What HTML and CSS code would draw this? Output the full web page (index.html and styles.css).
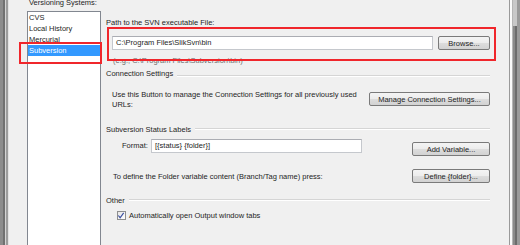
FILE: index.html
```html
<!DOCTYPE html>
<html lang="en">
<head>
    <meta charset="UTF-8">
    <title>Versioning Systems - Subversion</title>
    <link rel="stylesheet" href="styles.css">
</head>
<body>

<div class="window">
    <!-- left window frame -->
    <div class="edge-left"></div>

    <!-- list of versioning systems -->
    <div class="sidebar">
        <div class="sidebar-label">Versioning Systems:</div>
        <ul class="vcs-list">
            <li>CVS</li>
            <li>Local History</li>
            <li>Mercurial</li>
            <li class="selected">Subversion<span class="mark mark-item"></span></li>
        </ul>
    </div>

    <!-- subversion options -->
    <div class="options">
        <div class="mark mark-path"></div>

        <div class="text-row path-label">Path to the SVN executable File:</div>
        <div class="path-row">
            <div class="field path-field">C:\Program Files\SlikSvn\bin</div>
            <button class="btn browse-btn">Browse...</button>
        </div>
        <div class="text-row hint">(e.g., C:\Program Files\Subversion\bin)</div>

        <div class="group-title conn-title">Connection Settings</div>
        <div class="conn-row">
            <div class="conn-text">Use this Button to manage the Connection Settings for all previously used<br>URLs:</div>
            <button class="btn manage-btn">Manage Connection Settings...</button>
        </div>

        <div class="group-title status-title">Subversion Status Labels</div>
        <div class="format-row">
            <span class="format-label">Format:</span>
            <div class="field format-field">[{status} {folder}]</div>
            <button class="btn side-btn add-btn">Add Variable...</button>
        </div>
        <div class="define-row">
            <span>To define the Folder variable content (Branch/Tag name) press:</span>
            <button class="btn side-btn">Define {folder}...</button>
        </div>

        <div class="group-title other-title">Other</div>
        <label class="check-row">
            <span class="checkbox">
                <svg width="9" height="9" viewBox="0 0 9 9"><path d="M1.5 4.5 L3.5 7 L7.5 1.5" fill="none" stroke="#3a4fa0" stroke-width="1.3"/></svg>
            </span>
            Automatically open Output window tabs
        </label>
    </div>

    <!-- right window frame / scrollbar -->
    <div class="edge-right"><div class="thumb"></div></div>
</div>

</body>
</html>
```

FILE: styles.css
```css
/* page */
body {
    margin: 0;
    width: 520px;
    height: 245px;
    overflow: hidden;
    background-color: #f0f0f0;
    font-family: "Liberation Sans", Arial, sans-serif;
    font-size: 7.5px;
    color: #1e1e1e;
}

.window {
    display: flex;
    height: 245px;
}

/* frame on the left */
.edge-left {
    width: 9px;
    flex-shrink: 0;
    background: linear-gradient(to right, #8c8c8c 0 3px, #707070 3px 5px, #d4d4d4 5px 6px, #9c9c9c 6px 8px, #e2e2e2 8px 9px);
}

/* list column */
.sidebar {
    width: 92px;
    flex-shrink: 0;
    padding-left: 18px;
    box-sizing: border-box;
    display: flex;
    flex-direction: column;
}

.sidebar-label {
    margin-top: -2px;
    padding-left: 2px;
    height: 13px;
    line-height: 10px;
    white-space: nowrap;
}

.vcs-list {
    list-style: none;
    margin: 0;
    padding: 0;
    flex: 1;
    background: #fff;
    border: 1px solid #828790;
    border-bottom: none;
}

.vcs-list li {
    position: relative;
    height: 11px;
    line-height: 11px;
    padding-left: 1px;
}

.vcs-list li.selected {
    background: #3399ff;
    color: #fff;
}

/* red annotation boxes */
.mark {
    position: absolute;
    border: 2px solid #f0262b;
    box-sizing: border-box;
}

.mark-item {
    left: -9px;
    top: -3px;
    width: 83px;
    height: 22px;
}

.options {
    position: relative;
    flex: 1;
    min-width: 0;
    padding: 0 19px 0 5px;
}

.mark-path {
    left: 6px;
    top: 27px;
    width: 389px;
    height: 34px;
}

.text-row {
    height: 10px;
    line-height: 10px;
}

.path-label {
    margin-top: 18px;
}

/* text fields */
.field {
    box-sizing: border-box;
    height: 14px;
    line-height: 12px;
    padding-left: 3px;
    background: #fff;
    border: 1px solid #c5c8cd;
    border-top-color: #abadb3;
    white-space: nowrap;
}

/* buttons */
.btn {
    box-sizing: border-box;
    height: 14px;
    padding: 0;
    font-family: inherit;
    font-size: 7.5px;
    color: #1e1e1e;
    border: 1px solid #7a7a7a;
    border-radius: 2px;
    background: linear-gradient(#f4f4f4, #ececec 50%, #dddddd 50%, #d2d2d2);
}

.path-row {
    display: flex;
    margin-top: 8px;
    padding-left: 6px;
}

.path-field {
    width: 321px;
}

.browse-btn {
    width: 52px;
    margin-left: 5px;
}

.hint {
    margin-top: 6px;
    padding-left: 7px;
    color: #6d6d6d;
}

/* group titles with the line after them */
.group-title {
    display: flex;
    align-items: center;
    height: 10px;
    line-height: 10px;
}

.group-title::after {
    content: "";
    flex: 1;
    height: 1px;
    margin-left: 4px;
    margin-top: 4px;
    background: #d5d5d5;
    border-bottom: 1px solid #fff;
}

.conn-title {
    margin-top: 3px;
}

.conn-row {
    display: flex;
    justify-content: space-between;
    margin-top: 11px;
    padding-left: 6px;
}

.conn-text {
    white-space: nowrap;
    line-height: 10px;
}

.manage-btn {
    width: 121px;
    margin-top: 2px;
    flex-shrink: 0;
}

.status-title {
    margin-top: 15px;
}

.status-title::after {
    margin-top: -3px;
}

.format-row {
    display: flex;
    margin-top: 4px;
    padding-left: 16px;
}

.format-label {
    line-height: 14px;
    width: 29px;
}

.format-field {
    width: 211px;
}

.side-btn {
    width: 78px;
    margin-left: auto;
}

.add-btn {
    margin-top: 3px;
}

.define-row {
    display: flex;
    align-items: center;
    margin-top: 13px;
    padding-left: 7px;
}

.other-title {
    margin-top: 13px;
}

.other-title::after {
    margin-top: -3px;
}

.check-row {
    display: flex;
    align-items: center;
    margin-top: 4px;
    padding-left: 11px;
    height: 10px;
}

.checkbox {
    display: inline-flex;
    width: 9px;
    height: 9px;
    margin-right: 3px;
    box-sizing: border-box;
    border: 1px solid #8e8f8f;
    background: linear-gradient(135deg, #e6e6e6, #ffffff);
}

.checkbox svg {
    margin: -1px 0 0 -1px;
}

/* frame on the right */
.edge-right {
    position: relative;
    width: 11px;
    flex-shrink: 0;
    background: linear-gradient(to right, #9a9a9a 0 1px, #fafafa 1px 3px, #b4b4b4 3px 4px, #8a8a8a 4px 6px, #6c6c6c 6px 8px, #9a9a9a 8px 11px);
}

.thumb {
    position: absolute;
    left: 4px;
    top: 0;
    width: 4px;
    height: 26px;
    background: #c8c8c8;
}
```
